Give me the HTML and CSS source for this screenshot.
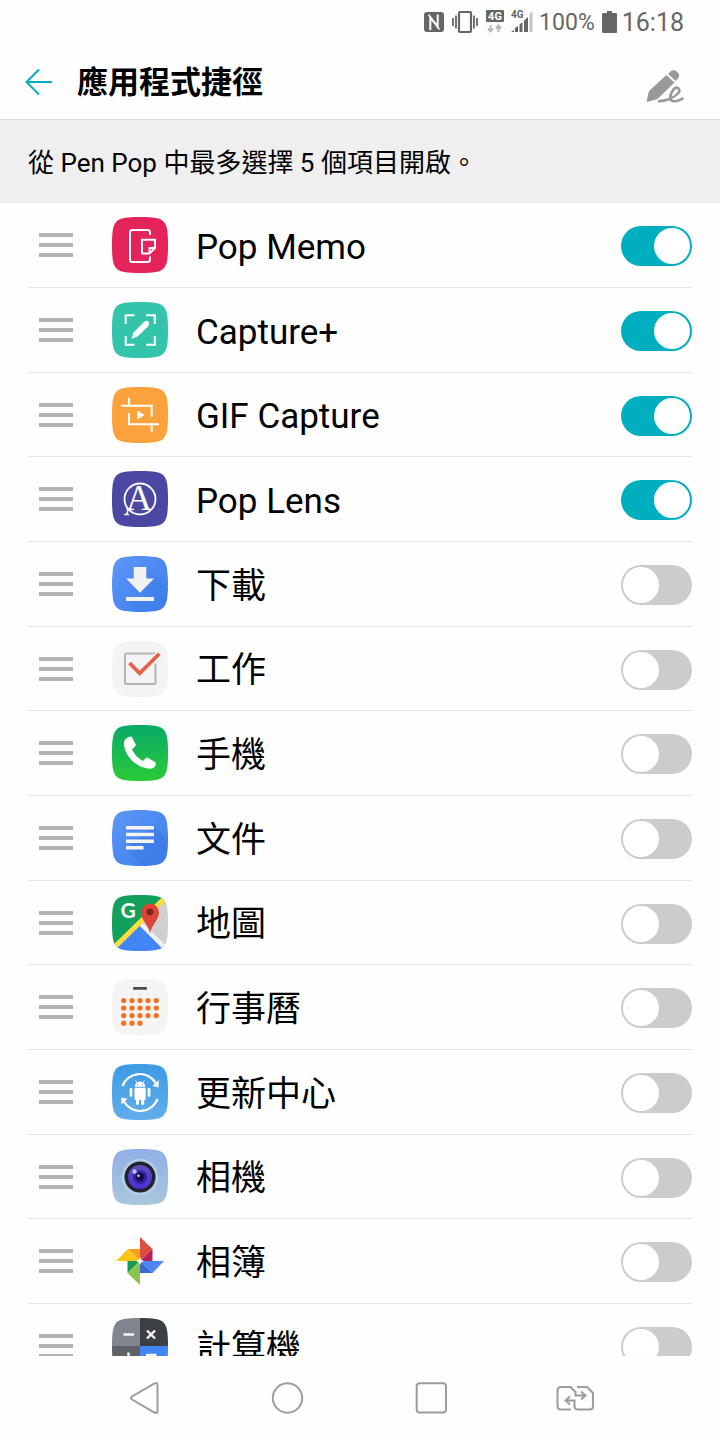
FILE: index.html
```html
<!DOCTYPE html>
<html lang="zh-Hant">
  <head>
    <meta charset="UTF-8" />
    <meta name="viewport" content="width=device-width, initial-scale=1.0" />
    <title>應用程式捷徑</title>
    <link rel="stylesheet" href="styles.css">
  </head>
  <body>
    <!-- shared shapes and gradients for the app icons -->
    <svg class="defs" aria-hidden="true">
      <defs>
        <path id="plate" d="M28 0C42 0 48 1 51.500 4.500C55 8 56 14 56 28S55 48 51.500 51.500S42 56 28 56S8 55 4.500 51.500S0 42 0 28S1 8 4.500 4.500S14 0 28 0Z" />
        <clipPath id="plate-clip"><use href="#plate" /></clipPath>
        <linearGradient id="g-blue" x1="0" y1="0" x2="1" y2="1">
          <stop offset="0" stop-color="#5c96f8" /><stop offset="1" stop-color="#3d7fec" />
        </linearGradient>
        <linearGradient id="g-green" x1="0" y1="0" x2="0" y2="1">
          <stop offset="0" stop-color="#08aa68" /><stop offset="1" stop-color="#2bca38" />
        </linearGradient>
        <linearGradient id="g-sky" x1="0" y1="0" x2="0" y2="1">
          <stop offset="0" stop-color="#3d9be3" /><stop offset="1" stop-color="#62adeb" />
        </linearGradient>
        <linearGradient id="g-camera" x1="0" y1="0" x2="0" y2="1">
          <stop offset="0" stop-color="#92afe8" /><stop offset="1" stop-color="#a9c6dc" />
        </linearGradient>
        <linearGradient id="g-lens" x1="0" y1="0" x2="0" y2="1">
          <stop offset="0" stop-color="#5a50c0" /><stop offset="1" stop-color="#4a2fd6" />
        </linearGradient>
      </defs>
    </svg>

    <div class="status-bar">
      <div class="status-icons">
        <svg width="21" height="24" viewBox="0 0 21 24">
          <rect x="0" y="2" width="20" height="20" rx="3" fill="#666" />
          <path d="M6.300 20V7.500L13.700 16.500V4.500" fill="none" stroke="#fefefe" stroke-width="2" />
          <path d="M4.500 4.500L8 9M12 15L15.500 19.500" stroke="#fefefe" stroke-width="1.400" />
        </svg>
        <svg width="27" height="24" viewBox="0 0 27 24" fill="none" stroke="#666">
          <rect x="7" y="2" width="12" height="20" rx="1" stroke-width="2.200" />
          <path d="M4 5.500v13M22 5.500v13" stroke-width="1.800" />
          <path d="M1 8v8M25 8v8" stroke-width="1.800" />
        </svg>
        <svg width="18" height="24" viewBox="0 0 18 24">
          <rect x="0" y="0" width="18" height="12" rx="1" fill="#666" />
          <text class="badge-text" x="9" y="10" text-anchor="middle">4G</text>
          <path d="M4.500 15v6M2 18.500L4.500 21.500l2.500-3M12.500 22v-6M10 18.500L12.500 15.500l2.500 3" fill="none" stroke="#b8b8b8" stroke-width="2" />
        </svg>
        <svg width="22" height="24" viewBox="0 0 22 24">
          <text class="signal-text" x="0" y="8">4G</text>
          <path fill="#666" d="M0 22L3 20V22zM4 18L7 16V22H4zM8.500 14.500L11.500 12V22H8.500zM13 10.500L17 7V22H13z" />
          <path fill="#c4c4c4" d="M18.500 4L21.500 1V22H18.500z" />
        </svg>
      </div>
      <span class="battery-level">100%</span>
      <svg width="19" height="24" viewBox="0 0 19 24">
        <path fill="#666" d="M8 1h5v2h4q1 0 1 1v18q0 1-1 1H4q-1 0-1-1V4q0-1 1-1h4z" />
      </svg>
      <span class="clock">16:18</span>
    </div>

    <header class="header">
      <button type="button" class="icon-button" aria-label="返回">
        <svg width="28" height="28" viewBox="0 0 28 28" fill="none" stroke="#00afbf" stroke-width="2">
          <path d="M14 1.500L1.500 14L14 26.500M1.500 14H27" />
        </svg>
      </button>
      <h1 class="title">應用程式捷徑</h1>
      <button type="button" class="icon-button pen-button" aria-label="Pen Pop">
        <svg width="38" height="34" viewBox="0 0 38 34">
          <path fill="#999" d="M.5 33L2.500 23.500Q3 22 4 21L20.500 6L28.500 13.500L12.500 29Q11.500 30 10 30.500z" />
          <path fill="#999" d="M22 5L24.500 2.500C28.500 -1.500 36 5 32 9.500L29.700 12z" />
          <path d="M12 32C18 33 28 29 32.500 24C35 20 30.500 16 27 21C23.500 26.500 23 31.500 27.500 32.200C31 32.600 35 30.500 37.500 29" fill="none" stroke="#999" stroke-width="2.600" />
        </svg>
      </button>
    </header>

    <p class="hint">從 Pen Pop 中最多選擇 5 個項目開啟。</p>

    <main class="app-list">
      <div class="app-row">
        <button type="button" class="handle" aria-label="移動"><span></span></button>
        <svg class="app-icon" viewBox="0 0 56 56">
          <use href="#plate" fill="#e4235b" />
          <g fill="none" stroke="#fff" stroke-width="2">
            <path d="M38 18v-2.500q0-2.500-2.500-2.500h-15q-2.500 0-2.500 2.500v27q0 2.500 2.500 2.500h15q2.500 0 2.500-2.500V39.500" />
            <path d="M30 22.700h13V31L37.500 36.500H30zM37.500 36.500V31H43" />
          </g>
        </svg>
        <label class="app-name" for="app-memo">Pop Memo</label>
        <input type="checkbox" class="switch" id="app-memo" checked>
      </div>

      <div class="app-row">
        <button type="button" class="handle" aria-label="移動"><span></span></button>
        <svg class="app-icon" viewBox="0 0 56 56">
          <use href="#plate" fill="#34c4ac" />
          <path d="M13.700 22V13.300H22.500M34 13.300H42.800V22M42.800 34V42.800H34M22.500 42.800H13.700V34" fill="none" stroke="#fff" stroke-width="2" />
          <path fill="#fff" d="M19.400 37L21.500 30.500L32 20C34 18 38 18.500 37 22.500L36 24.500L25.500 34.500z" />
        </svg>
        <label class="app-name" for="app-capture">Capture+</label>
        <input type="checkbox" class="switch" id="app-capture" checked>
      </div>

      <div class="app-row">
        <button type="button" class="handle" aria-label="移動"><span></span></button>
        <svg class="app-icon" viewBox="0 0 56 56">
          <use href="#plate" fill="#fca23d" />
          <path d="M9.300 18.700H39.700V29.700M17 10.700V18.700M17 26V37.300H47M39.700 37.300V45.300" fill="none" stroke="#fff" stroke-width="2" />
          <path fill="#fff" d="M25.300 23.500V32.500L32.500 28z" />
        </svg>
        <label class="app-name" for="app-gif">GIF Capture</label>
        <input type="checkbox" class="switch" id="app-gif" checked>
      </div>

      <div class="app-row">
        <button type="button" class="handle" aria-label="移動"><span></span></button>
        <svg class="app-icon" viewBox="0 0 56 56">
          <use href="#plate" fill="#4b47a2" />
          <circle cx="28" cy="28" r="15.500" fill="none" stroke="#fff" stroke-width="1.800" />
          <text class="lens-text" x="27" y="39" text-anchor="middle">A</text>
          <path d="M16.500 38L14.500 43.500M12 43.500H17" stroke="#fff" stroke-width="1.500" />
        </svg>
        <label class="app-name" for="app-lens">Pop Lens</label>
        <input type="checkbox" class="switch" id="app-lens" checked>
      </div>

      <div class="app-row">
        <button type="button" class="handle" aria-label="移動"><span></span></button>
        <svg class="app-icon" viewBox="0 0 56 56">
          <g clip-path="url(#plate-clip)">
            <use href="#plate" fill="url(#g-blue)" />
            <path fill="#3b78e0" opacity=".25" d="M34.300 11L56 33V56H25L14 45H42L28 36.700z" />
          </g>
          <path fill="#f2f2f2" d="M21.700 11H34.300V22.500H42L28 36.800L14 22.500H21.700zM14 41H42V45H14z" />
        </svg>
        <label class="app-name" for="app-download">下載</label>
        <input type="checkbox" class="switch" id="app-download">
      </div>

      <div class="app-row">
        <button type="button" class="handle" aria-label="移動"><span></span></button>
        <svg class="app-icon" viewBox="0 0 56 56">
          <use href="#plate" fill="#f4f4f4" />
          <path d="M43.500 12.500H14.500Q13 12.500 13 14V41.500Q13 43 14.500 43H42Q43.500 43 43.500 41.500V22.500" fill="none" stroke="#b5b5b5" stroke-width="2" />
          <path d="M17.500 22L27.700 32.300L47.300 12.700" fill="none" stroke="#f4f4f4" stroke-width="6" />
          <path d="M17.500 22L27.700 32.300L47.300 12.700" fill="none" stroke="#ea5f48" stroke-width="3.700" />
        </svg>
        <label class="app-name" for="app-tasks">工作</label>
        <input type="checkbox" class="switch" id="app-tasks">
      </div>

      <div class="app-row">
        <button type="button" class="handle" aria-label="移動"><span></span></button>
        <svg class="app-icon" viewBox="0 0 56 56">
          <use href="#plate" fill="url(#g-green)" />
          <path fill="#fff" d="M18 11.700Q19.500 11.300 20.300 12.700L23.700 19.500Q24 20.500 23.200 21.300L20 24.500C22 29 26 33.500 31 36L33.700 33.200Q34.700 32.300 35.800 32.800L43 37Q44.300 38 43.800 39.500C43 42.500 41 43.700 37.500 43.700C24 43 12 30 12 18.500C12 15 14.500 12.300 18 11.700z" />
        </svg>
        <label class="app-name" for="app-phone">手機</label>
        <input type="checkbox" class="switch" id="app-phone">
      </div>

      <div class="app-row">
        <button type="button" class="handle" aria-label="移動"><span></span></button>
        <svg class="app-icon" viewBox="0 0 56 56">
          <g clip-path="url(#plate-clip)">
            <use href="#plate" fill="url(#g-blue)" />
            <path fill="#3b75de" opacity=".5" d="M42 16L56 30V56H31L14 39.500z" />
          </g>
          <path fill="#f4f4f4" d="M14 16H42V19.500H14zM14 22.700H42V26.200H14zM14 29.500H42V33H14zM14 36H31.500V39.500H14z" />
        </svg>
        <label class="app-name" for="app-docs">文件</label>
        <input type="checkbox" class="switch" id="app-docs">
      </div>

      <div class="app-row">
        <button type="button" class="handle" aria-label="移動"><span></span></button>
        <svg class="app-icon" viewBox="0 0 56 56">
          <g clip-path="url(#plate-clip)">
            <path fill="#12a05c" d="M0 0H56L0 56z" />
            <path fill="#d0d0d0" d="M56 0V56L29 29z" />
            <path fill="#4285f4" d="M28.500 29L56 56H0z" />
            <path d="M28 28L57 57" stroke="#f1f1f1" stroke-width="4.500" />
            <path d="M-2 56.500L56 0" stroke="#fedd3f" stroke-width="5" />
          </g>
          <text class="maps-text" x="16" y="23" text-anchor="middle">G</text>
          <path fill="#db4437" d="M38 39C37 30 29 25 29 17.500A9 9 0 0 1 47 17.500C47 25 39 30 38 39z" />
          <circle cx="38" cy="17" r="3.300" fill="#7b231d" />
        </svg>
        <label class="app-name" for="app-maps">地圖</label>
        <input type="checkbox" class="switch" id="app-maps">
      </div>

      <div class="app-row">
        <button type="button" class="handle" aria-label="移動"><span></span></button>
        <svg class="app-icon" viewBox="0 0 56 56">
          <use href="#plate" fill="#f4f4f4" />
          <rect x="21" y="8" width="14" height="2.700" rx="1" fill="#4d4d4d" />
          <!-- zero-length dashes with round caps give the day dots -->
          <g stroke="#f4701f" stroke-width="5.200" stroke-linecap="round">
            <path d="M11.700 21.500h0M20 21.500h0M28 21.500h0M36 21.500h0M44.300 21.500h0" />
            <path d="M11.700 29h0M20 29h0M28 29h0M36 29h0M44.300 29h0" />
            <path d="M11.700 36.700h0M20 36.700h0M28 36.700h0M36 36.700h0M44.300 36.700h0" />
            <path d="M11.700 44.200h0M20 44.200h0M28 44.200h0" />
          </g>
        </svg>
        <label class="app-name" for="app-calendar">行事曆</label>
        <input type="checkbox" class="switch" id="app-calendar">
      </div>

      <div class="app-row">
        <button type="button" class="handle" aria-label="移動"><span></span></button>
        <svg class="app-icon" viewBox="0 0 56 56">
          <use href="#plate" fill="url(#g-sky)" />
          <path d="M10.500 22A18.500 18.500 0 0 1 44 19.500M45.500 35A18.500 18.500 0 0 1 12 37.500" fill="none" stroke="#fff" stroke-width="2.200" />
          <path fill="#fff" d="M40.500 22L46.700 16V23.500zM9.300 33.500L15.700 34.700L9.500 40.500z" />
          <path fill="#fff" d="M22.700 22.800A5.300 5.300 0 0 1 33.300 22.800zM22.500 23.800H33.700V35Q33.700 36 32.700 36H23.500Q22.500 36 22.500 35z" />
          <path d="M19 25.500V31.500M37 25.500V31.500" stroke="#fff" stroke-width="2.800" stroke-linecap="round" />
          <path d="M25.500 35V39.500M30.700 35V39.500" stroke="#fff" stroke-width="3" stroke-linecap="round" />
          <path d="M23.500 16.300L25.300 19M32.500 16.300L30.700 19" stroke="#fff" stroke-width=".8" />
          <path d="M25.700 20.800h0M30.300 20.800h0" stroke="#4aa2e6" stroke-width="1.200" stroke-linecap="round" />
        </svg>
        <label class="app-name" for="app-update">更新中心</label>
        <input type="checkbox" class="switch" id="app-update">
      </div>

      <div class="app-row">
        <button type="button" class="handle" aria-label="移動"><span></span></button>
        <svg class="app-icon" viewBox="0 0 56 56">
          <use href="#plate" fill="url(#g-camera)" />
          <circle cx="28" cy="28" r="18.300" fill="#b3cde6" />
          <circle cx="28" cy="28" r="15.500" fill="#23232d" />
          <circle cx="28" cy="28" r="12" fill="url(#g-lens)" />
          <circle cx="28" cy="28" r="7" fill="#3420a0" />
          <circle cx="28" cy="28" r="4.300" fill="#140c48" />
          <circle cx="22.500" cy="22.500" r="2.200" fill="#c3bdf2" />
          <circle cx="26.500" cy="26.800" r="1.200" fill="#e6e2ff" />
        </svg>
        <label class="app-name" for="app-camera">相機</label>
        <input type="checkbox" class="switch" id="app-camera">
      </div>

      <div class="app-row">
        <button type="button" class="handle" aria-label="移動"><span></span></button>
        <svg class="app-icon" viewBox="0 0 56 56">
          <path fill="#db4f40" d="M28 4L40.500 16L28 28z" />
          <path fill="#b3205e" d="M40.500 16V28H28z" />
          <path fill="#fec514" d="M4 28L16 16L28 28z" />
          <path fill="#ff9d1e" d="M16 16H28V28z" />
          <path fill="#4a86f5" d="M28 28H52L40.500 40z" />
          <path fill="#3868d0" d="M28 28L40.500 40H28z" />
          <path fill="#159a5c" d="M15.500 28H28L15.500 40z" />
          <path fill="#8ac44b" d="M28 28V52L15.500 40z" />
          <path fill="#fff" d="M28 24L29.200 26.800L32 28L29.200 29.200L28 32L26.800 29.200L24 28L26.800 26.800z" />
        </svg>
        <label class="app-name" for="app-photos">相簿</label>
        <input type="checkbox" class="switch" id="app-photos">
      </div>

      <div class="app-row">
        <button type="button" class="handle" aria-label="移動"><span></span></button>
        <svg class="app-icon" viewBox="0 0 56 56">
          <g clip-path="url(#plate-clip)">
            <path fill="#81868e" d="M0 0H28V28H0z" />
            <path fill="#3c4043" d="M28 0H56V28H28z" />
            <path fill="#5f6368" d="M0 28H28V56H0z" />
            <path fill="#4285f4" d="M28 28H56V56H28z" />
          </g>
          <path d="M11.500 16.500H22M35 12.500L43 20.500M43 12.500L35 20.500M16.500 34.500V45M11.200 39.700H21.700M34 37H44.500M34 42H44.500" stroke="#f4f4f4" stroke-width="2.400" />
        </svg>
        <label class="app-name" for="app-calc">計算機</label>
        <input type="checkbox" class="switch" id="app-calc">
      </div>
    </main>

    <nav class="nav-bar">
      <button type="button" class="icon-button" aria-label="返回">
        <svg width="40" height="40" viewBox="0 0 40 40" fill="none" stroke="#9c9c9c" stroke-width="2">
          <path d="M30.500 5.500Q33.500 4 33.500 7V33Q33.500 36 30.500 34.500L8 21.500Q6 20 8 18.500z" />
        </svg>
      </button>
      <button type="button" class="icon-button" aria-label="主畫面">
        <svg width="40" height="40" viewBox="0 0 40 40" fill="none" stroke="#9c9c9c" stroke-width="2">
          <circle cx="19.500" cy="20" r="14.700" />
        </svg>
      </button>
      <button type="button" class="icon-button" aria-label="最近使用">
        <svg width="40" height="40" viewBox="0 0 40 40" fill="none" stroke="#9c9c9c" stroke-width="2">
          <rect x="4.700" y="5.300" width="29.300" height="29.300" rx="3" />
        </svg>
      </button>
      <button type="button" class="icon-button" aria-label="切換">
        <svg width="40" height="40" viewBox="0 0 40 40" fill="none" stroke="#9c9c9c" stroke-width="2">
          <path d="M15 31.500H5Q1.500 31.500 1.500 28V12.500Q1.500 9 5 9H14.500L19.500 14V17.500H29M25 13.500L29.500 17.500L25 21.500" />
          <path d="M21 9H31L37 15V28Q37 31.500 33.500 31.500H22Q18.500 31.500 18.500 28V22.500H10M14 18.500L9.500 22.500L14 26.500" />
        </svg>
      </button>
    </nav>
  </body>
</html>
```

FILE: styles.css
```css
* {
  box-sizing: border-box;
}
body {
  margin: 0;
  height: 100vh;
  display: flex;
  flex-direction: column;
  background-color: #fefefe;
  color: #000;
  font-family: Roboto, "Noto Sans CJK TC", sans-serif;
}
button {
  padding: 0;
  border: 0;
  background: none;
  cursor: pointer;
}
svg {
  display: block;
  flex: none;
}
.defs {
  position: absolute;
  width: 0;
  height: 0;
}

/************************
  STATUS BAR
************************/
.status-bar {
  display: flex;
  flex: none;
  justify-content: flex-end;
  align-items: center;
  gap: 4px;
  height: 44px;
  padding-right: 36px;
  color: #666;
}
.status-icons {
  display: flex;
  gap: 7px;
  padding-right: 2px;
}
.battery-level {
  font-size: 23px;
}
.clock {
  font-size: 25px;
}
.badge-text {
  font-size: 11px;
  font-weight: 700;
  fill: #fff;
}
.signal-text {
  font-size: 10px;
  font-weight: 700;
  fill: #666;
}

/************************
  HEADER
************************/
.header {
  display: flex;
  flex: none;
  align-items: center;
  gap: 24px;
  height: 76px;
  padding: 0 36px 0 25px;
  border-bottom: 1px solid #dcdcdc;
}
.title {
  flex: 1;
  margin: 0;
  padding-top: 2px;
  font-size: 31px;
  line-height: 40px;
  font-weight: 700;
}
.pen-button {
  padding-top: 8px;
}
.hint {
  flex: none;
  margin: 0;
  padding: 24px 28px 20px;
  background-color: #efefef;
  font-size: 26px;
  line-height: 39px;
}

/************************
  APP LIST
************************/
.app-list {
  flex: 1;
  min-height: 0;
  overflow-y: auto;
  scrollbar-width: none;
  padding: 0 28px;
}
.app-row {
  display: flex;
  align-items: center;
  gap: 28px;
  height: 85px;
  border-bottom: 1px solid #e4e4e4;
}
.app-row:nth-child(3n) {
  height: 84px;
}
.handle {
  display: flex;
  justify-content: center;
  width: 56px;
}
.handle span {
  width: 34px;
  height: 24px;
  border: solid #b3b3b3;
  border-width: 4px 0;
  background: linear-gradient(#b3b3b3, #b3b3b3) center / 100% 4px no-repeat;
}
.app-icon {
  width: 56px;
  height: 56px;
}
.app-name {
  flex: 1;
  padding-top: 5px;
  font-size: 35px;
  line-height: 48px;
}
.lens-text {
  font-family: "Liberation Serif", serif;
  font-size: 36px;
  fill: #fff;
}
.maps-text {
  font-family: Lato, sans-serif;
  font-size: 21px;
  font-weight: 700;
  fill: #fff;
}
.switch {
  appearance: none;
  width: 71px;
  height: 40px;
  margin: 2px 0 0;
  padding: 2px;
  border-radius: 20px;
  background-color: #ccc;
  cursor: pointer;
}
.switch::before {
  content: "";
  display: block;
  width: 36px;
  height: 36px;
  border-radius: 50%;
  background-color: #fff;
}
.switch:checked {
  background-color: #00afbf;
}
.switch:checked::before {
  margin-left: auto;
}

/************************
  NAVIGATION BAR
************************/
.nav-bar {
  display: flex;
  flex: none;
  justify-content: space-around;
  align-items: center;
  height: 84px;
  padding: 0 72px;
}
```
